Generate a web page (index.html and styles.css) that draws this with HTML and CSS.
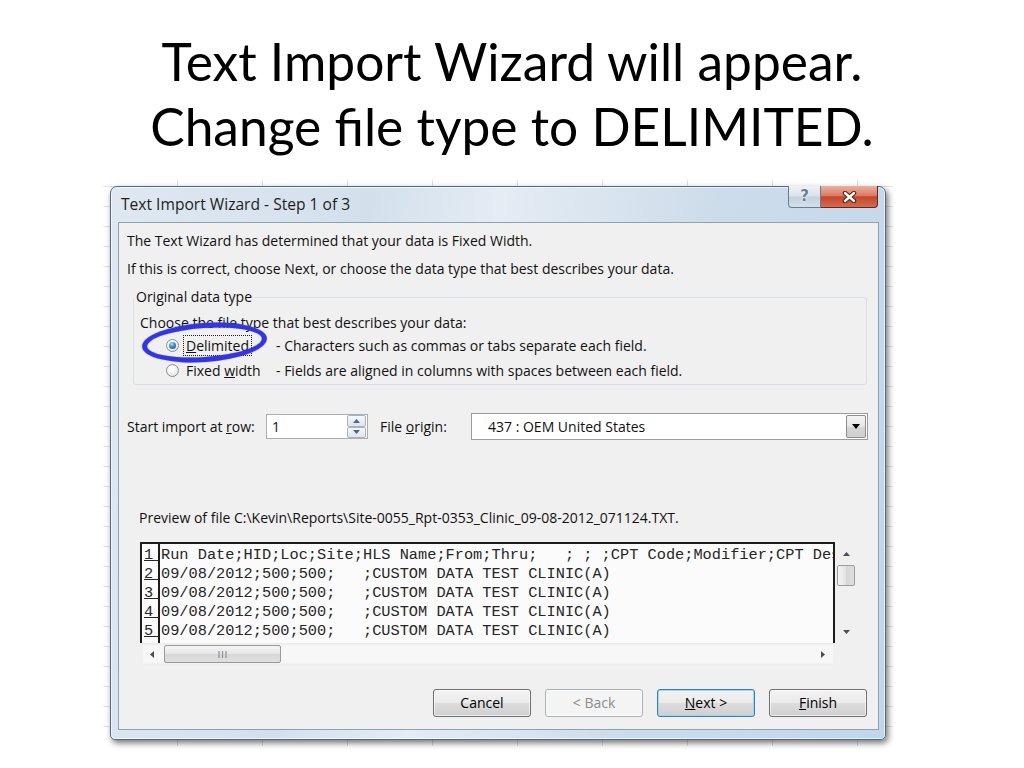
FILE: index.html
```html
<!DOCTYPE html>
<html>
<head>
    <title>Text Import Wizard</title>
    <meta charset="UTF-8">
    <meta name="viewport" content="width=device-width, initial-scale=1.0">
    <link rel="stylesheet" href="styles.css">
</head>
<body>
    <div class="slide">
        <h1 class="slide-title">Text Import Wizard will appear.<br>Change file type to DELIMITED.</h1>

        <div class="shot">
            <div class="window">
                <div class="titlebar">
                    <span class="caption">Text Import Wizard - Step 1 of 3</span>
                    <div class="caption-buttons">
                        <div class="btn-help">?</div>
                        <div class="btn-close">
                            <svg width="15" height="12" viewBox="0 0 15 12">
                                <path d="M3 2 L12 10 M12 2 L3 10" stroke="#5a1d12" stroke-width="4.5" stroke-linecap="round"/>
                                <path d="M3 2 L12 10 M12 2 L3 10" stroke="#ffffff" stroke-width="2.4" stroke-linecap="round"/>
                            </svg>
                        </div>
                    </div>
                </div>

                <div class="client">
                    <div class="intro">
                        <p>The Text Wizard has determined that your data is Fixed Width.</p>
                        <p>If this is correct, choose Next, or choose the data type that best describes your data.</p>
                    </div>

                    <fieldset class="group">
                        <legend>Original data type</legend>
                        <div class="choose">Choose the file type that best describes your data:</div>
                        <div class="radio-row">
                            <span class="radio checked"></span>
                            <span class="radio-label"><span class="focus"><u>D</u>elimited</span></span>
                            <span class="radio-desc">- Characters such as commas or tabs separate each field.</span>
                            <div class="circle"></div>
                        </div>
                        <div class="radio-row">
                            <span class="radio"></span>
                            <span class="radio-label"><span class="nofocus">Fixed <u>w</u>idth</span></span>
                            <span class="radio-desc">- Fields are aligned in columns with spaces between each field.</span>
                        </div>
                    </fieldset>

                    <div class="import-row">
                        <span class="import-label">Start import at <u>r</u>ow:</span>
                        <div class="spin-box">
                            <span class="spin-value">1</span>
                            <div class="spin-buttons">
                                <div class="spin-btn">
                                    <svg width="7" height="4" viewBox="0 0 7 4"><path d="M0 4 L3.5 0 L7 4 Z" fill="#4a6590"/></svg>
                                </div>
                                <div class="spin-btn">
                                    <svg width="7" height="4" viewBox="0 0 7 4"><path d="M0 0 L3.5 4 L7 0 Z" fill="#4a6590"/></svg>
                                </div>
                            </div>
                        </div>
                        <span class="origin-label">File <u>o</u>rigin:</span>
                        <div class="select-box">
                            <span class="select-value">437 : OEM United States</span>
                            <div class="drop-btn">
                                <svg width="8" height="5" viewBox="0 0 8 5"><path d="M0 0 L4 5 L8 0 Z" fill="#000"/></svg>
                            </div>
                        </div>
                    </div>

                    <div class="preview-label">Preview of file C:\Kevin\Reports\Site-0055_Rpt-0353_Clinic_09-08-2012_071124.TXT.</div>

                    <div class="preview">
                        <div class="preview-box">
                            <div class="nums">
                                <div class="num">1 </div>
                                <div class="num">2 </div>
                                <div class="num">3 </div>
                                <div class="num">4 </div>
                                <div class="num">5 </div>
                            </div>
                            <div class="lines">
                                <div class="line">Run Date;HID;Loc;Site;HLS Name;From;Thru;   ; ; ;CPT Code;Modifier;CPT Description</div>
                                <div class="line">09/08/2012;500;500;   ;CUSTOM DATA TEST CLINIC(A)</div>
                                <div class="line">09/08/2012;500;500;   ;CUSTOM DATA TEST CLINIC(A)</div>
                                <div class="line">09/08/2012;500;500;   ;CUSTOM DATA TEST CLINIC(A)</div>
                                <div class="line">09/08/2012;500;500;   ;CUSTOM DATA TEST CLINIC(A)</div>
                            </div>
                        </div>
                        <div class="vscroll">
                            <svg width="7" height="4" viewBox="0 0 7 4"><path d="M0 4 L3.5 0 L7 4 Z" fill="#4d4d4d"/></svg>
                            <div class="vthumb"></div>
                            <div class="spacer"></div>
                            <svg width="7" height="4" viewBox="0 0 7 4"><path d="M0 0 L3.5 4 L7 0 Z" fill="#4d4d4d"/></svg>
                        </div>
                        <div class="hscroll">
                            <svg width="4" height="7" viewBox="0 0 4 7"><path d="M4 0 L0 3.5 L4 7 Z" fill="#4d4d4d"/></svg>
                            <div class="hthumb">
                                <svg width="9" height="7" viewBox="0 0 9 7"><path d="M1 0 V7 M4.5 0 V7 M8 0 V7" stroke="#8a9099" stroke-width="1.2"/></svg>
                            </div>
                            <div class="spacer"></div>
                            <svg width="4" height="7" viewBox="0 0 4 7"><path d="M0 0 L4 3.5 L0 7 Z" fill="#4d4d4d"/></svg>
                        </div>
                        <div class="corner"></div>
                    </div>

                    <div class="buttons">
                        <div class="btn">Cancel</div>
                        <div class="btn disabled">&lt; Back</div>
                        <div class="btn default"><u>N</u>ext &gt;</div>
                        <div class="btn"><u>F</u>inish</div>
                    </div>
                </div>
            </div>
        </div>
    </div>
</body>
</html>
```

FILE: styles.css
```css
body {
    margin: 0;
    background: #ffffff;
    font-family: "Open Sans", sans-serif;
}
.slide {
    width: 1024px;
    height: 768px;
    overflow: hidden;
}
.slide-title {
    margin: 0;
    padding-top: 29px;
    font-family: Lato, "Open Sans", sans-serif;
    font-weight: normal;
    font-size: 51.5px;
    line-height: 65px;
    text-align: center;
    color: #000000;
}

/* screenshot of the dialog, with the sheet grid behind it */
.shot {
    width: 790px;
    height: 566px;
    box-sizing: border-box;
    margin: 21px 0 0 103px;
    padding: 6px 7px;
    background-color: #ffffff;
    background-image:
        linear-gradient(to right, #dedede 1px, transparent 1px),
        linear-gradient(#e4e4e4 1px, transparent 1px);
    background-size: 85px 20px;
    background-position: 74px 0, 0 6px;
}
.window {
    height: 554px;
    box-sizing: border-box;
    border: 1px solid #4d6c8a;
    border-radius: 7px 7px 5px 5px;
    padding: 0 6px 8px 7px;
    background: linear-gradient(100deg, #dfe8f1 0%, #d3e0ec 30%, #e4ecf4 45%, #cddcea 70%, #c2d6ea 100%);
    box-shadow: 2px 3px 6px rgba(0, 0, 0, 0.55), inset 0 0 0 1px rgba(255, 255, 255, 0.6);
}
.titlebar {
    display: flex;
    justify-content: space-between;
    height: 35px;
}
.caption {
    padding: 8px 0 0 3px;
    font-size: 15.6px;
    line-height: 18px;
    color: #1d1d1d;
}
.caption-buttons {
    display: flex;
    margin-top: -1px;
    margin-right: 1px;
    height: 22px;
}
.btn-help {
    width: 33px;
    box-sizing: border-box;
    border: 1px solid #6b7c8e;
    border-top: none;
    border-radius: 0 0 0 4px;
    background: linear-gradient(#eef2f6, #d9e2eb 48%, #c4d1de 52%, #d4dfe9);
    text-align: center;
    font-family: "DejaVu Sans", sans-serif;
    font-weight: bold;
    font-size: 15px;
    line-height: 21px;
    color: #6b7d90;
    text-shadow: 0 0 1px #ffffff, 0 0 2px #ffffff;
}
.btn-close {
    width: 57px;
    box-sizing: border-box;
    border: 1px solid #5e2a20;
    border-top: none;
    border-left: none;
    border-radius: 0 0 4px 0;
    background: linear-gradient(#eab0a2, #dc7b64 45%, #c4472c 52%, #d46a50);
    display: flex;
    align-items: center;
    justify-content: center;
}

.client {
    border: 1px solid #8ea2b6;
    background: #f0f0f0;
    padding-bottom: 12px;
    font-size: 14px;
    color: #111111;
}
.intro {
    padding: 4px 0 0 8px;
}
.intro p {
    margin: 0;
    line-height: 28px;
}
.group {
    margin: 6px 11px 0 14px;
    padding: 0 0 1px 0;
    border: 1px solid #d5dfe5;
    border-radius: 3px;
    min-width: 0;
}
.group legend {
    padding: 0 2px;
    line-height: 16px;
}
.choose {
    margin-top: 8px;
    padding-left: 6px;
    line-height: 20px;
}
.radio-row {
    position: relative;
    display: flex;
    align-items: center;
    height: 25px;
    padding-left: 32px;
}
.radio {
    position: relative;
    width: 13px;
    height: 13px;
    box-sizing: border-box;
    margin-right: 4px;
    border: 1px solid #8b8e91;
    border-radius: 50%;
    background: radial-gradient(circle at 40% 35%, #ffffff 20%, #e2e2e2 80%);
}
.radio.checked::after {
    content: "";
    position: absolute;
    left: 2px;
    top: 2px;
    width: 7px;
    height: 7px;
    border-radius: 50%;
    background: radial-gradient(circle at 40% 30%, #a9e0f8 0%, #3c8cc0 45%, #1b4f78 90%);
}
.radio-label {
    width: 93px;
}
.focus {
    border: 1px dotted #222222;
    padding: 0 2px;
    line-height: 17px;
}
.nofocus {
    padding: 0 3px;
    line-height: 17px;
}
.circle {
    position: absolute;
    left: 8px;
    top: -10px;
    width: 125px;
    height: 39px;
    box-sizing: border-box;
    border: 5px solid #3535dc;
    border-radius: 50%;
    transform: rotate(-4deg);
    box-shadow: 0 0 1px #3535dc, inset 0 0 1px #3535dc;
}

.import-row {
    display: flex;
    align-items: center;
    height: 27px;
    margin: 28px 0 0 8px;
}
.import-label {
    width: 139px;
}
.spin-box {
    display: flex;
    align-items: center;
    width: 102px;
    height: 25px;
    box-sizing: border-box;
    border: 1px solid #abadb3;
    background: #ffffff;
}
.spin-value {
    flex: 1;
    padding-left: 5px;
}
.spin-buttons {
    display: flex;
    flex-direction: column;
    width: 19px;
    height: 23px;
    margin-right: 1px;
}
.spin-btn {
    flex: 1;
    display: flex;
    align-items: center;
    justify-content: center;
    border: 1px solid #a9b3bf;
    border-radius: 2px;
    background: linear-gradient(#f6f8fa, #dfe5eb);
}
.origin-label {
    width: 91px;
    margin-left: 12px;
}
.select-box {
    display: flex;
    align-items: center;
    width: 397px;
    height: 27px;
    box-sizing: border-box;
    border: 1px solid #9c9c9c;
    background: #ffffff;
}
.select-value {
    flex: 1;
    padding-left: 16px;
}
.drop-btn {
    width: 20px;
    height: 23px;
    box-sizing: border-box;
    margin-right: 1px;
    border: 1px solid #8d8d8d;
    border-radius: 2px;
    background: linear-gradient(#f4f4f4, #e6e6e6 50%, #d6d6d6 51%, #cfcfcf);
    display: flex;
    align-items: center;
    justify-content: center;
}

.preview-label {
    margin: 68px 0 0 20px;
    line-height: 20px;
}
.preview {
    display: grid;
    grid-template-columns: 695px 22px;
    grid-template-rows: 101px 22px;
    width: 717px;
    margin: 14px 0 0 21px;
}
.preview-box {
    display: flex;
    overflow: hidden;
    border: 2px solid #1c1c1c;
    border-bottom: none;
    background: #fbfbfb;
    font-family: "Liberation Mono", "Courier New", monospace;
    font-size: 15.3px;
    line-height: 19px;
    color: #262626;
}
.nums {
    flex: none;
    width: 16px;
    padding-top: 2px;
    border-right: 2px solid #1c1c1c;
    overflow: hidden;
}
.num {
    white-space: pre;
    text-decoration: underline;
    padding-left: 2px;
}
.lines {
    padding: 2px 0 0 1px;
    overflow: hidden;
}
.line {
    white-space: pre;
}
.vscroll {
    display: flex;
    flex-direction: column;
    align-items: center;
    padding: 10px 0 9px 0;
}
.vthumb {
    width: 18px;
    height: 21px;
    box-sizing: border-box;
    margin-top: 9px;
    border: 1px solid #9a9a9a;
    border-radius: 2px;
    background: linear-gradient(to right, #f5f5f5, #e2e2e2 50%, #d6d6d6 51%, #dedede);
}
.spacer {
    flex: 1;
}
.hscroll {
    display: flex;
    align-items: center;
    margin-left: 3px;
    margin-right: 2px;
    padding: 0 8px 0 7px;
    background: linear-gradient(#e9e9e9, #f7f7f7 3px, #f7f7f7 19px, #ececec);
}
.hthumb {
    width: 117px;
    height: 18px;
    box-sizing: border-box;
    margin-left: 10px;
    border: 1px solid #9a9a9a;
    border-radius: 2px;
    background: linear-gradient(#f5f5f5, #e6e6e6 50%, #d8d8d8 51%, #e0e0e0);
    display: flex;
    align-items: center;
    justify-content: center;
}

.buttons {
    display: flex;
    justify-content: flex-end;
    gap: 14px;
    margin: 24px 11px 0 0;
}
.btn {
    width: 98px;
    height: 28px;
    box-sizing: border-box;
    border: 1px solid #707070;
    border-radius: 3px;
    background: linear-gradient(#f2f2f2, #ebebeb 48%, #dddddd 52%, #cfcfcf);
    box-shadow: inset 0 0 0 1px rgba(255, 255, 255, 0.7);
    text-align: center;
    line-height: 26px;
    font-size: 14px;
    color: #000000;
}
.btn.disabled {
    border-color: #adb2b5;
    background: #f4f4f4;
    color: #8c8c8c;
}
.btn.default {
    border-color: #3c7fb1;
    box-shadow: inset 0 0 0 1px #9fd6f6;
}
```
